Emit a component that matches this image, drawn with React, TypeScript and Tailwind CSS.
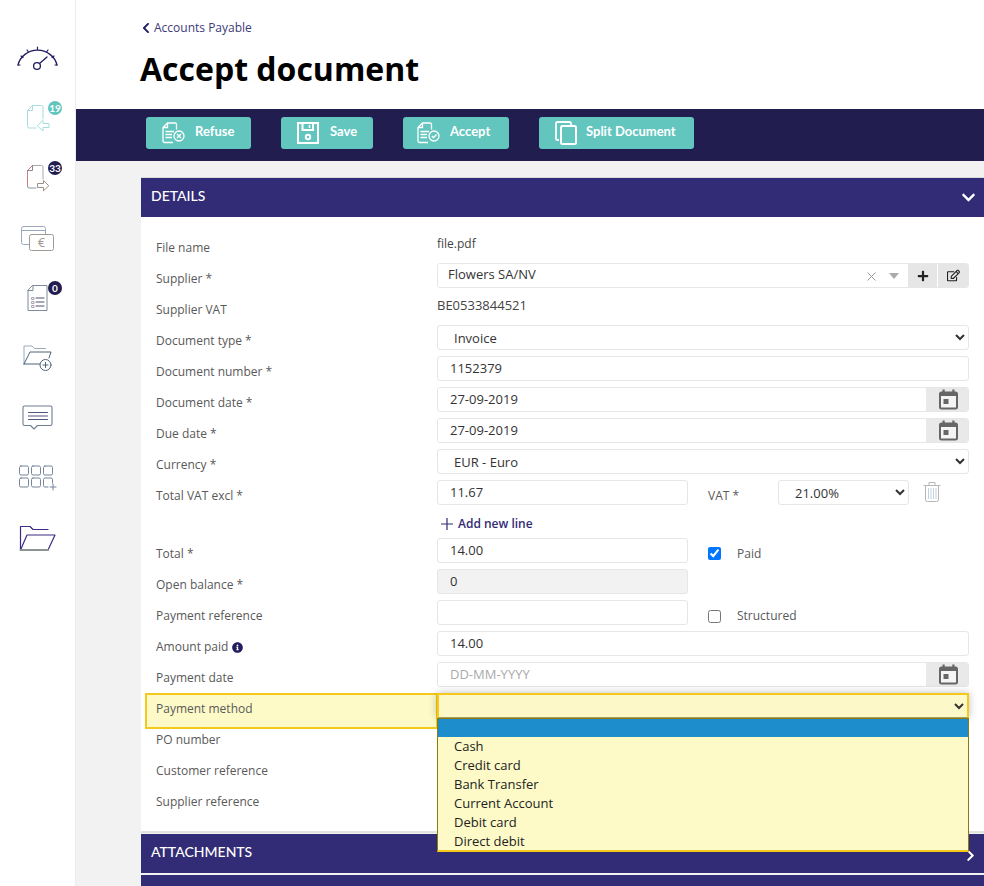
import React from "react";
import { FaChevronDown, FaChevronLeft, FaChevronRight, FaInfoCircle, FaPlus, FaRegEdit } from "react-icons/fa";

const Cal = () => (
  <svg width="19" height="21" viewBox="0 0 19 21" fill="none">
    <rect x="1" y="3.5" width="17" height="16" rx="1.5" stroke="#666" strokeWidth="2" fill="#f4f4f4" />
    <rect x="1" y="3" width="17" height="4" fill="#666" />
    <rect x="3.500" y="0.5" width="2.2" height="4" fill="#666" />
    <rect x="13.300" y="0.5" width="2.2" height="4" fill="#666" />
    <rect x="4.500" y="10" width="5" height="5" fill="#666" />
  </svg>
);

const Trash = () => (
  <svg width="18" height="21" viewBox="0 0 18 21" fill="none" stroke="#b5b5b5" strokeWidth="1">
    <path d="M0.5 4.5H17.5M6 4V1.5H12V4" />
    <path d="M2.5 4.5V18.5Q2.5 20.5 4.5 20.5H13.5Q15.5 20.5 15.5 18.5V4.5" />
    <path d="M5.5 7V18M8 7V18M10.5 7V18M13 7V18" stroke="#c4d0de" />
  </svg>
);

const Field = ({ children, className = "" }: { children?: React.ReactNode; className?: string }) => (
  <div className={"h-[25px] border border-[#e6e6e6] rounded-[3px] bg-white px-[12px] pt-[1px] flex items-center text-[13px] text-[#333] overflow-hidden " + className}>{children}</div>
);

const Sel = ({ value, className = "" }: { value: string; className?: string }) => (
  <select defaultValue={value} className={"h-[25px] border border-[#e6e6e6] rounded-[3px] bg-white pl-3 text-[13px] text-[#333] " + className}>
    <option>{value}</option>
  </select>
);

const Row = ({ label, children, info }: { label: string; children?: React.ReactNode; info?: boolean }) => (
  <div className="relative flex h-[25px] mb-[6px]">
    <div className="w-[281px] shrink-0 pt-[6px] leading-[20px] text-[#595959] flex items-start gap-1">
      <span>{label}</span>
      {info && <FaInfoCircle className="mt-[5px] text-[11px] text-[#211d5f]" />}
    </div>
    <div className="w-[532px] flex items-stretch">{children}</div>
  </div>
);

const DateField = ({ value, placeholder }: { value?: string; placeholder?: string }) => (
  <div className="flex w-full h-[25px] border border-[#e6e6e6] rounded-[3px] overflow-hidden text-[13px]">
    <div className="flex-1 flex items-center px-[12px] pt-[1px] bg-white">
      {value ? <span className="text-[#333]">{value}</span> : <span className="text-[#aaa]">{placeholder}</span>}
    </div>
    <div className="w-[42px] bg-[#e9e9e9] flex items-center justify-center pl-[3px]">
      <Cal />
    </div>
  </div>
);

const NavIcon = ({ top, children }: { top: number; children: React.ReactNode }) => (
  <svg width="75" height="60" viewBox={`0 ${top} 75 60`} fill="none" strokeLinecap="round" strokeLinejoin="round">
    {children}
  </svg>
);

const Badge = ({ n, color, className }: { n: string; color: string; className: string }) => (
  <span className={"absolute w-[14px] h-[14px] rounded-full text-white text-[10px] font-bold leading-[14px] text-center " + color + " " + className} style={{ fontFamily: "Lato, sans-serif" }}>
    {n}
  </span>
);

const Sidebar = () => (
  <div className="w-[76px] shrink-0 bg-white border-r border-r-[#ececec] pt-[28px]">
    <NavIcon top={28}>
      <path d="M18 65A20 19 0 0 1 57 65" stroke="#211d5f" strokeWidth="1.3" />
      <path d="M18 65h2M21 56l2 1.5M27 50l1.5 2M37.5 47v2.5M48 50l-1.5 2M54 56l-2 1.5M57 65h-2" stroke="#211d5f" strokeWidth="1.2" />
      <circle cx="37" cy="66" r="3.4" stroke="#211d5f" strokeWidth="1.3" />
      <path d="M39.5 63.5L47 57" stroke="#211d5f" strokeWidth="1.3" />
    </NavIcon>
    <div className="relative">
      <NavIcon top={88}>
        <path d="M43 119V107Q43 105.500 41.500 105.500H32.500L27.500 110.500V126.500Q27.500 128 29 128H36" stroke="#a6dcde" strokeWidth="1" />
        <path d="M32.500 105.500V110.500H27.500" stroke="#a6dcde" strokeWidth="1" />
        <path d="M37.500 125.500L43 120.500V123.500H49V127.500H43V130.500Z" stroke="#a6dcde" strokeWidth="1" />
      </NavIcon>
      <Badge n="19" color="bg-[#62c6be]" className="left-[48px] top-[13px]" />
    </div>
    <div className="relative">
      <NavIcon top={148}>
        <path d="M43 179V167Q43 165.500 41.500 165.500H32.500" stroke="#a8a8a8" strokeWidth="1" />
        <path d="M32.500 165.500L27.500 170.500V186.500" stroke="#c87f80" strokeWidth="1" />
        <path d="M27.500 186.500Q27.500 188 29 188H36" stroke="#8a94a0" strokeWidth="1" />
        <path d="M32.500 165.500V170.500H27.500" stroke="#8a8a9a" strokeWidth="1" />
        <path d="M48.500 185.500L43.500 180.500V183.500H37.500V187.500H43.500V190.500Z" stroke="#9a8f82" strokeWidth="1" />
      </NavIcon>
      <Badge n="33" color="bg-[#211d4f]" className="left-[48px] top-[13px]" />
    </div>
    <NavIcon top={208}>
      <rect x="21.500" y="226.500" width="24" height="18" rx="2" stroke="#9aa9c0" strokeWidth="1" />
      <path d="M21.500 230.500H45.500" stroke="#9aa9c0" />
      <rect x="29.500" y="234.500" width="24" height="16" rx="2" stroke="#a09a92" strokeWidth="1" fill="white" />
      <text x="41.500" y="247" textAnchor="middle" fontSize="13" fill="#a09a92" stroke="none" fontFamily="Open Sans, sans-serif">€</text>
    </NavIcon>
    <div className="relative">
      <NavIcon top={268}>
        <path d="M33 285.500H47V310.500H28V290.500ZM33 285.500V290.500H28" stroke="#7f8a9a" strokeWidth="1" />
        <path d="M36 298H44M36 302H44M36 306H44" stroke="#4a4f70" strokeWidth="1" />
        <path d="M32 297.500h2v2h-2zM32 301.500h2v2h-2zM32 305.500h2v2h-2z" stroke="#9a8a9a" strokeWidth="0.8" />
      </NavIcon>
      <Badge n="0" color="bg-[#211d4f]" className="left-[48px] top-[13px]" />
    </div>
    <NavIcon top={328}>
      <path d="M24 364V346H32L34.500 348.500H45.500" stroke="#9ab" strokeWidth="1" />
      <path d="M24 364L30 352H51L49 358M24 364H40" stroke="#4f6278" strokeWidth="1" />
      <circle cx="45.500" cy="365" r="5.500" stroke="#4f6278" strokeWidth="1" fill="white" />
      <path d="M43 365H48M45.500 362.500V367.500" stroke="#4f6278" strokeWidth="1" />
    </NavIcon>
    <NavIcon top={388}>
      <path d="M24.500 406H50.500Q52 406 52 407.500V424Q52 425.500 50.500 425.500H37.500L34 429L30.500 425.500H24.500Q23 425.500 23 424V407.500Q23 406 24.500 406Z" stroke="#6f7f8f" strokeWidth="1.1" />
      <path d="M28.500 412.500H47.500M28.500 416H47.500M28.500 419.500H47.500" stroke="#4a5a78" strokeWidth="1" />
    </NavIcon>
    <NavIcon top={448}>
      <g stroke="#75869a" strokeWidth="1">
        <rect x="19.500" y="466" width="9" height="9" rx="1.500" />
        <rect x="31.500" y="466" width="9" height="9" rx="1.500" />
        <rect x="43.500" y="466" width="9" height="9" rx="1.500" />
        <rect x="19.500" y="478" width="9" height="9" rx="1.500" />
        <rect x="31.500" y="478" width="9" height="9" rx="1.500" />
        <path d="M52.500 483V479.500Q52.500 478 51 478H45Q43.500 478 43.500 479.500V485.500Q43.500 487 45 487H48" />
        <path d="M50 487H56M53 484V490" />
      </g>
    </NavIcon>
    <NavIcon top={508}>
      <path d="M20.500 550V526.500H30L33 529.500H48" stroke="#3c2a86" strokeWidth="1.2" />
      <path d="M20.500 550L27 535H55L48 550" stroke="#3c2a86" strokeWidth="1.2" />
      <path d="M20.500 550H48" stroke="#8a9492" strokeWidth="2" />
    </NavIcon>
  </div>
);

const BtnIcon = ({ kind }: { kind: string }) => {
  if (kind === "save")
    return (
      <svg width="22" height="22" viewBox="0 0 22 22" fill="none" stroke="white" strokeWidth="2">
        <path d="M1 1H21V21H1Z" />
        <path d="M5.500 1V8H16V1" />
        <path d="M12.500 3V6" strokeWidth="1.500" />
        <circle cx="11" cy="15" r="2.200" />
      </svg>
    );
  if (kind === "split")
    return (
      <svg width="22" height="24" viewBox="0 0 22 24" fill="none" stroke="white" strokeWidth="1.800">
        <path d="M4 19H2.500Q1 19 1 17.500V2.500Q1 1 2.500 1H14.500Q16 1 16 2.500V4" />
        <rect x="6" y="5" width="15" height="18" rx="1.500" strokeWidth="2" />
      </svg>
    );
  return (
    <svg width="23" height="22" viewBox="0 0 23 22" fill="none" stroke="white" strokeWidth="1.300">
      <path d="M14.500 7.500V2.500Q14.500 1 13 1H5.500L1 5.500V19Q1 20.500 2.500 20.500H11" />
      <path d="M5.500 1V5.500H1" />
      <path d="M3.500 9.500H12M3.500 12.500H10M3.500 15.500H10" />
      <circle cx="17" cy="14" r="5" />
      {kind === "x" ? <path d="M15 12L19 16M19 12L15 16" /> : <path d="M14.800 14L16.500 15.700L19.500 12.500" />}
    </svg>
  );
};

const Btn = ({ icon, label, cls, gap }: { icon: string; label: string; cls: string; gap: string }) => (
  <div className={"h-[32px] bg-[#62c6be] rounded-[3px] flex items-center text-white font-bold text-[13px] " + cls + " " + gap} style={{ fontFamily: "Lato, sans-serif" }}>
    <BtnIcon kind={icon} />
    <span className="-mt-[2px]">{label}</span>
  </div>
);

const Band = ({ label, children }: { label: string; children: React.ReactNode }) => (
  <div className="h-[39px] bg-[#322b75] flex items-center justify-between pl-[10px] pr-[8px] text-white text-[14px] font-medium" style={{ fontFamily: "Lato, sans-serif" }}>
    <span className="-mt-[4px]">{label}</span>
    {children}
  </div>
);

export default function App() {
  return (
    <div className="flex h-[886px] w-[984px] overflow-hidden bg-white text-[12px]" style={{ fontFamily: '"Open Sans", sans-serif' }}>
      <Sidebar />
      <div className="flex-1 min-w-0 flex flex-col bg-[#f2f2f2]">
        <div className="h-[109px] bg-white pl-[64px] shrink-0">
          <div className="pt-[18px] h-[37px] flex items-center gap-[2px] text-[#3d3a78] text-[12px]">
            <FaChevronLeft className="text-[12px] text-[#211d5f]" />
            <span>Accounts Payable</span>
          </div>
          <h1 className="mt-[10px] text-[32px] leading-[44px] font-bold text-black">Accept document</h1>
        </div>
        <div className="h-[52px] bg-[#211d4f] shrink-0 flex items-start pt-[8px] pl-[70px] gap-[30px]">
          <Btn icon="x" label="Refuse" cls="w-[105px] pl-[16px]" gap="gap-[10px]" />
          <Btn icon="save" label="Save" cls="w-[92px] pl-[16px]" gap="gap-[11px]" />
          <Btn icon="check" label="Accept" cls="w-[106px] pl-[14px]" gap="gap-[10px]" />
          <Btn icon="split" label="Split Document" cls="w-[155px] pl-[16px]" gap="gap-[9px]" />
        </div>
        <div className="ml-[65px] mt-[16px] border-t border-t-[#dcdcdc] flex flex-col">
          <Band label="DETAILS">
            <FaChevronDown className="text-[15px] -mt-[1px]" />
          </Band>
          <div className="bg-white px-[15px] pt-[15px] h-[616px] border-b-2 border-b-[#e2e2e2] flex flex-col">
            <Row label="File name">
              <span className="text-[#444] leading-[20px] pt-[2px]">file.pdf</span>
            </Row>
            <Row label="Supplier *">
              <div className="flex w-full h-[25px] border border-[#e6e6e6] rounded-[3px] overflow-hidden">
                <div className="flex-1 flex items-center pl-[10px] bg-white text-[13px] text-[#333]">
                  <span className="flex-1 -mt-[2px]">Flowers SA/NV</span>
                  <svg width="9" height="9" viewBox="0 0 9 9" stroke="#999" strokeWidth="1" className="mr-[13px] mt-[2px]">
                    <path d="M0.500 0.500L8.500 8.500M8.500 0.500L0.500 8.500" />
                  </svg>
                  <span className="mr-[9px] w-0 h-0 border-x-[5px] border-x-transparent border-t-[6px] border-t-[#aaa]" />
                </div>
                <div className="w-[30px] bg-[#e6e6e6] flex items-center justify-center border-r border-r-white">
                  <FaPlus className="text-[12px] text-[#222]" />
                </div>
                <div className="w-[30px] bg-[#e6e6e6] flex items-center justify-center">
                  <FaRegEdit className="text-[13px] text-[#222]" />
                </div>
              </div>
            </Row>
            <Row label="Supplier VAT">
              <span className="text-[13px] text-[#444] leading-[20px] pt-[1px]">BE0533844521</span>
            </Row>
            <Row label="Document type *">
              <Sel value="Invoice" className="w-full" />
            </Row>
            <Row label="Document number *">
              <Field className="w-full">1152379</Field>
            </Row>
            <Row label="Document date *">
              <DateField value="27-09-2019" />
            </Row>
            <Row label="Due date *">
              <DateField value="27-09-2019" />
            </Row>
            <Row label="Currency *">
              <Sel value="EUR - Euro" className="w-full" />
            </Row>
            <Row label="Total VAT excl *">
              <Field className="w-[251px]">11.67</Field>
              <span className="ml-[20px] w-[70px] text-[#595959] leading-[20px] pt-[6px]">VAT *</span>
              <Sel value="21.00%" className="w-[131px]" />
              <span className="ml-[14px] mt-[1px]">
                <Trash />
              </span>
            </Row>
            <div className="h-[22px] mb-[5px] pl-[284px] pt-[4px] flex items-center gap-[4px] text-[#322b75] font-semibold">
              <svg width="14" height="14" viewBox="0 0 14 14" stroke="#322b75" strokeWidth="1.200">
                <path d="M7 1V13M1 7H13" />
              </svg>
              <span>Add new line</span>
            </div>
            <Row label="Total *">
              <Field className="w-[251px]">14.00</Field>
              <input type="checkbox" defaultChecked className="ml-[20px] mt-[9px] w-[13px] h-[13px]" />
              <span className="ml-[16px] pt-[6px] leading-[20px] text-[#595959]">Paid</span>
            </Row>
            <Row label="Open balance *">
              <Field className="w-[251px] !bg-[#f2f2f2]">0</Field>
            </Row>
            <Row label="Payment reference">
              <Field className="w-[251px]" />
              <input type="checkbox" className="ml-[20px] mt-[10px] w-[13px] h-[13px]" />
              <span className="ml-[16px] pt-[6px] leading-[20px] text-[#595959]">Structured</span>
            </Row>
            <Row label="Amount paid" info>
              <Field className="w-full">14.00</Field>
            </Row>
            <Row label="Payment date">
              <DateField placeholder="DD-MM-YYYY" />
            </Row>
            <div className="relative h-[25px] mb-[6px] flex">
              <div className="absolute left-[-11px] top-0 w-[293px] h-[36px] bg-[#fdfac8] border-2 border-[#f5c91c]" />
              <div className="relative w-[281px] shrink-0 pt-[6px] leading-[20px] text-[#595959]">Payment method</div>
              <div className="relative w-[532px] z-10 shadow-[0_0_8px_rgba(0,0,0,0.25)]">
                <select className="w-full h-[26px] bg-[#fcf8c8] border-2 border-[#f5c91c] border-b-[#a89c60] text-[13px] text-[#333]">
                  <option></option>
                </select>
                <div className="absolute left-0 top-[25px] w-[532px] h-[134px] bg-[#fdfac8] border border-[#8a7a10] border-b-2 border-b-[#f5c91c] text-[13px] text-[#222] leading-[19px]">
                  <div className="h-[18px] bg-[#1e8dcb]" />
                  <div className="pl-[16px]">Cash</div>
                  <div className="pl-[16px]">Credit card</div>
                  <div className="pl-[16px]">Bank Transfer</div>
                  <div className="pl-[16px]">Current Account</div>
                  <div className="pl-[16px]">Debit card</div>
                  <div className="pl-[16px]">Direct debit</div>
                </div>
              </div>
            </div>
            <Row label="PO number" />
            <Row label="Customer reference" />
            <Row label="Supplier reference" />
          </div>
          <div className="mt-px">
            <Band label="ATTACHMENTS">
              <FaChevronRight className="text-[13px] -mr-[1px] mt-[3px]" />
            </Band>
          </div>
          <div className="mt-[2px] h-[40px] bg-[#322b75]" />
        </div>
      </div>
    </div>
  );
}
